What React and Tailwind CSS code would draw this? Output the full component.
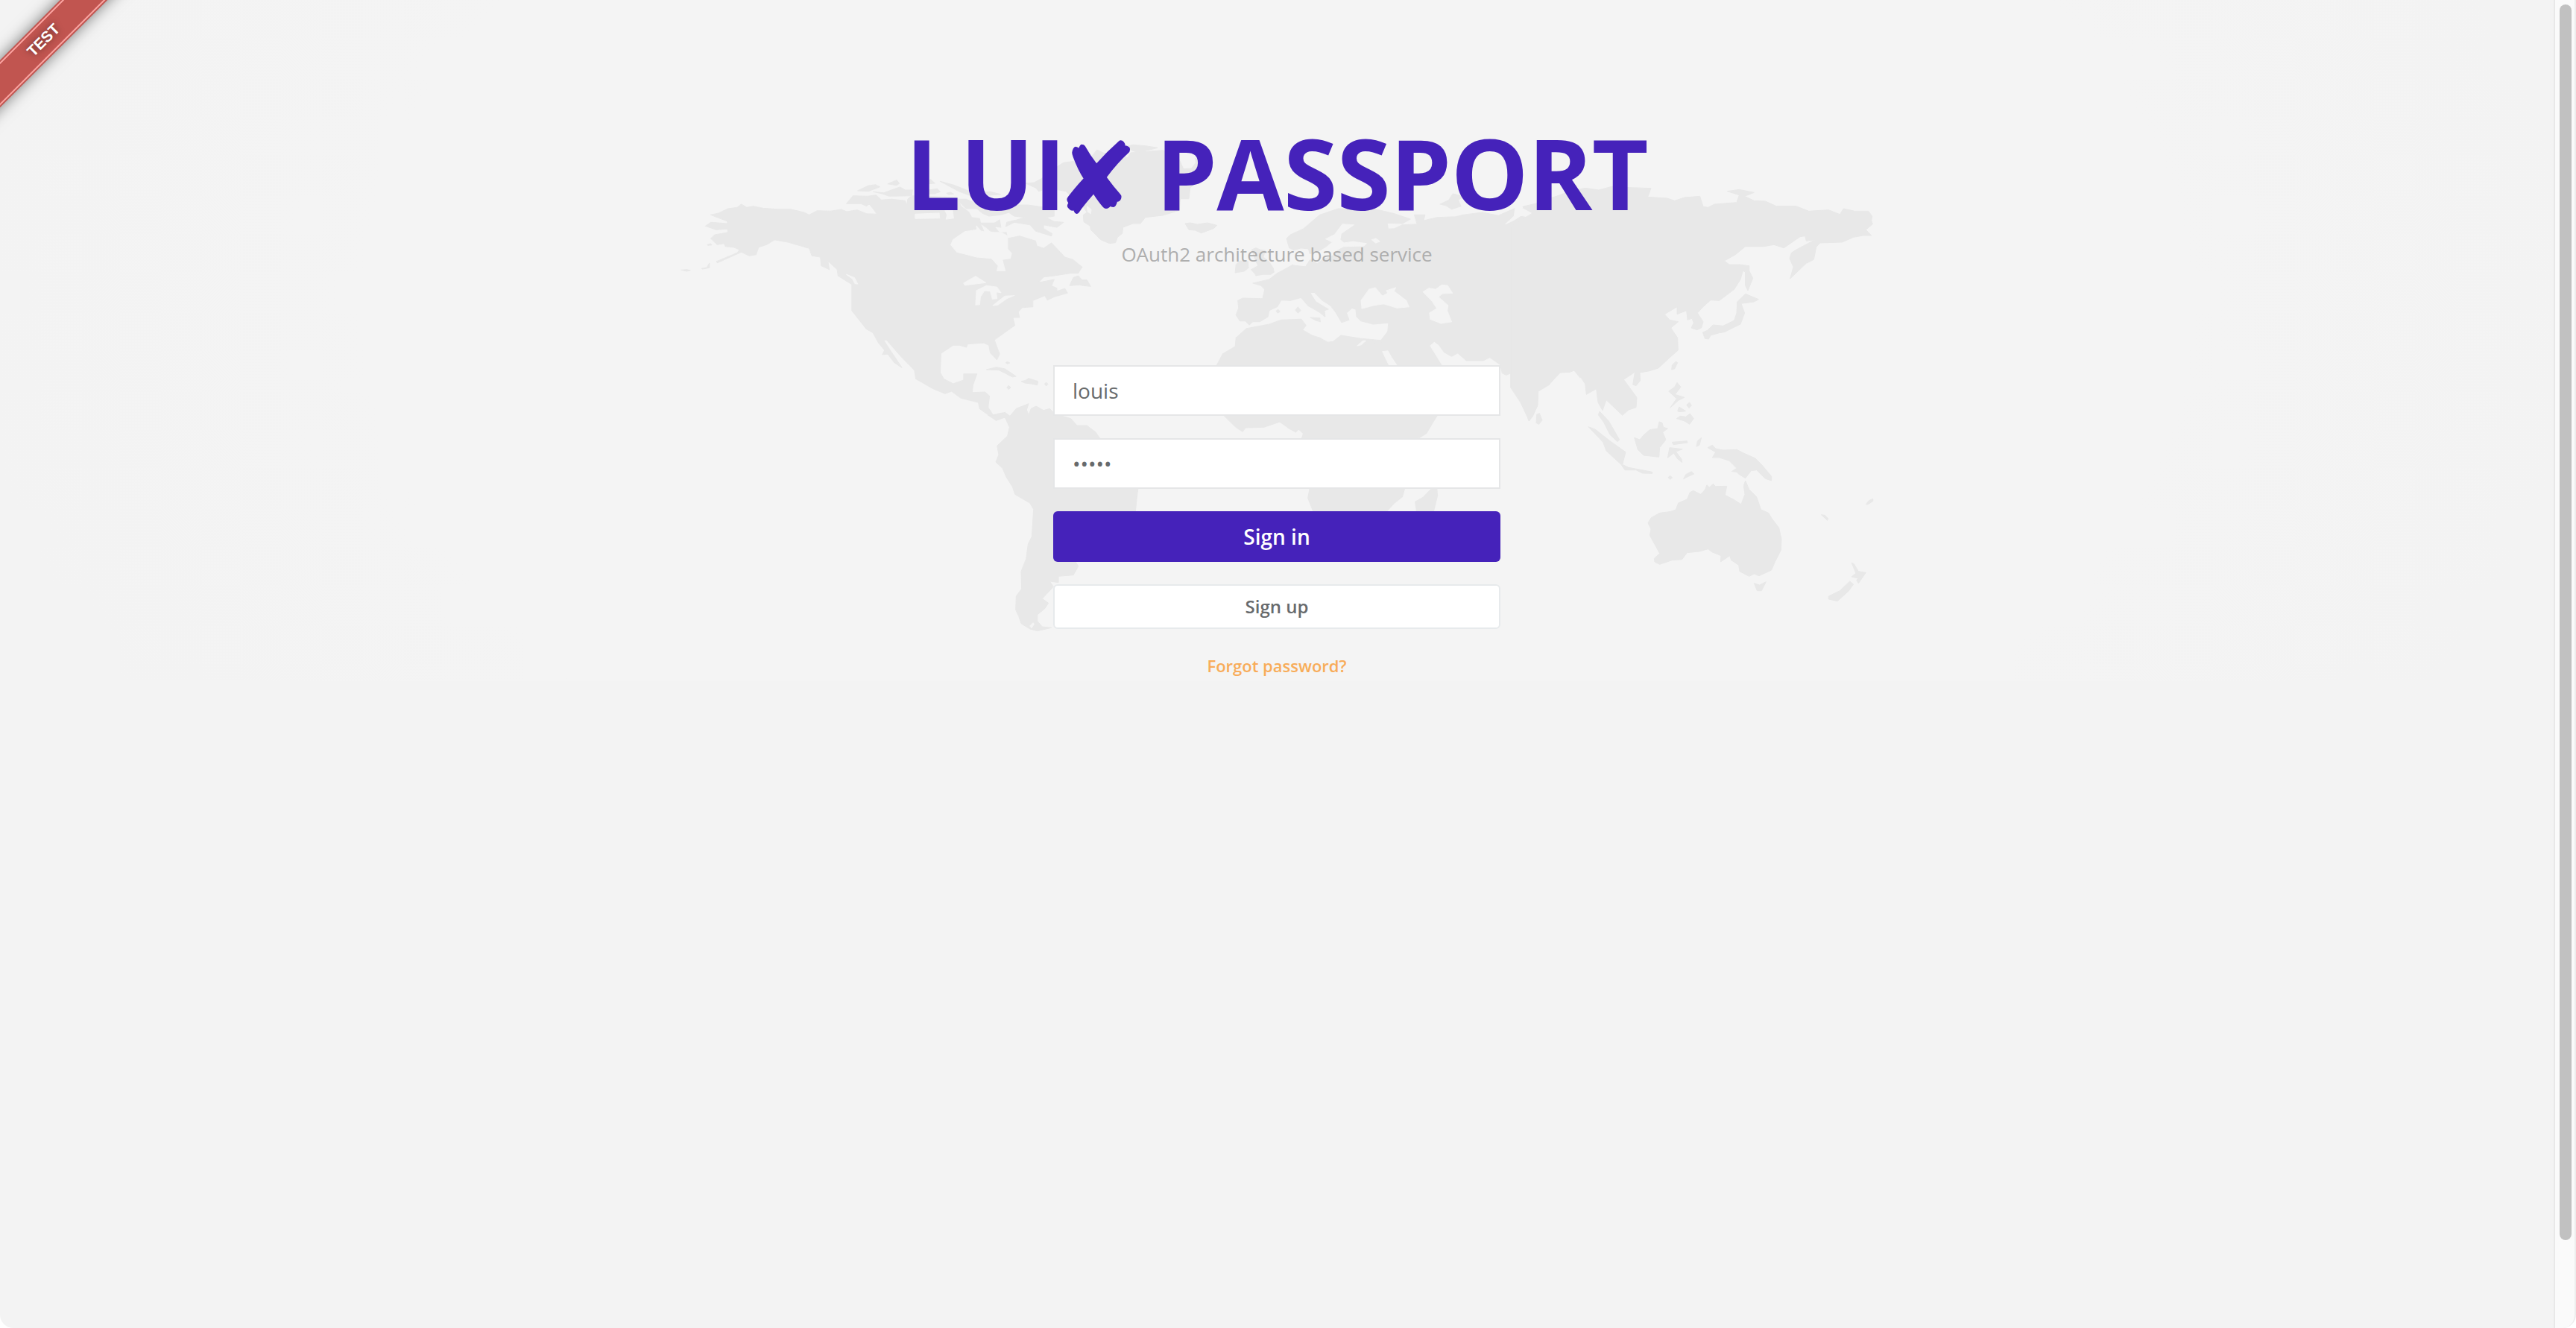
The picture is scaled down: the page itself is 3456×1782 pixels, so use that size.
const LAND = '#e8e8e8';
const WATER = '#f4f4f4';

const regions = [
  {
    name: 'north-america',
    transform: 'translate(900 180) scale(.35714 .33333)',
    land: [
      '150,325 180,318 215,300 250,295 265,282 285,295 310,290 345,298 400,302 450,302 500,315 520,325 550,308 600,310 640,303 660,312 700,305 735,320 775,322 745,280 735,290 715,280 660,280 685,248 740,250 770,245 790,265 830,262 880,268 887,286 890,262 905,248 1075,255 1090,290 1120,315 1130,335 1160,340 1165,365 1180,400 1260,395 1265,420 1310,410 1370,430 1375,450 1400,460 1430,438 1480,495 1510,505 1545,535 1530,560 1500,560 1440,570 1400,575 1380,598 1440,585 1430,610 1450,620 1450,632 1480,622 1490,640 1440,655 1415,668 1405,650 1360,670 1360,695 1320,698 1305,715 1310,738 1285,738 1292,770 1215,828 1235,885 1225,908 1200,880 1195,850 1175,840 1115,845 1110,858 1085,850 1060,850 1015,882 1012,960 1025,985 1060,1005 1100,990 1100,965 1150,965 1135,1010 1132,1040 1180,1038 1197,1055 1192,1100 1210,1130 1245,1122 1275,1137 1275,1150 1250,1140 1222,1153 1160,1105 1155,1080 1090,1063 1055,1035 1030,1045 985,1025 920,985 915,950 865,895 810,828 800,830 830,880 868,940 840,920 815,885 795,888 803,870 780,840 760,800 735,785 680,710 680,605 628,570 625,545 590,510 595,545 565,530 562,495 530,490 520,460 440,435 390,425 360,445 330,455 320,485 295,490 265,475 175,518 172,512 250,478 258,465 235,455 205,452 200,440 175,445 150,420 165,405 215,395 213,382 170,385 130,370 150,355 213,360 212,350 175,335',
      '1075,262 1110,262 1160,285 1340,285 1440,300 1440,330 1410,335 1440,352 1475,355 1450,375 1400,365 1400,380 1432,400 1430,410 1370,390 1350,365 1290,355 1258,372 1262,355 1300,345 1330,335 1290,330 1270,315 1240,325 1195,330 1170,318 1150,300 1110,300',
      '1160,358 1215,358 1235,345 1240,375 1215,372 1235,398 1200,390 1185,375',
      '702,228 740,208 768,203 785,212 742,230',
      '815,200 848,185 858,198 848,206',
      '760,232 800,236 860,213 880,225 908,225 905,248 820,250 795,240',
      '965,190 975,182 992,198 968,200',
      '968,225 1000,220 1012,232 990,240 968,240',
      '1012,190 1060,204 1110,225 1140,236 1200,232 1238,242 1200,246 1120,245 1085,232',
      '1036,238 1050,234 1062,241 1045,243',
      '137,445 150,441 153,446 140,448',
      '116,541 135,537 145,520 145,538 120,543',
      '39,547 60,545 73,548 60,552',
    ],
    water: [
      '918,322 1008,318 1010,338 918,340',
      '1030,308 1058,306 1062,338 1034,342 1038,325',
      '1052,445 1060,425 1105,392 1150,385 1148,370 1165,390 1190,395 1240,395 1265,410 1265,462 1280,480 1275,500 1245,505 1256,550 1225,550 1230,530 1205,500 1150,495 1075,475',
      '1100,600 1145,572 1183,598 1150,602 1105,608',
      '1210,690 1255,652 1290,650 1262,662 1228,688',
      '660,565 690,578 702,603 692,602 682,582',
      '1145,688 1148,630 1185,610 1225,616 1240,638 1222,635 1225,662 1208,664 1200,632 1178,630 1163,655 1160,686',
    ],
  },
  {
    name: 'greenland',
    transform: 'translate(1330 165) scale(.33333)',
    land: [
      '262,178 290,160 360,150 400,140 425,108 450,120 550,140 560,120 690,110 760,130 830,145 838,170 832,230 800,262 795,305 760,305 757,352 690,372 620,380 600,405 570,405 530,420 527,445 508,460 500,482 475,485 440,470 400,430 398,415 372,398 370,370 385,360 375,345 300,275 262,268',
      '540,95 570,88 620,92 670,100 620,112 590,120 560,108',
      '138,243 172,240 200,225 215,215 262,265 225,265 190,275 180,262',
      '315,655 330,622 350,615 365,632 385,632 400,658 370,655 355,652',
      '780,405 800,402 830,408 870,402 908,412 895,425 845,443 820,432 795,430',
    ],
    water: ['385,335 402,348 400,365 388,358', '756,140 775,182 805,180 820,160 815,120 756,118'],
  },
  {
    name: 'south-america',
    transform: 'translate(1240 440) scale(.33333)',
    land: [
      '255,350 290,350 325,340 345,355 370,325 420,305 412,330 420,350 430,325 450,315 480,332 505,325 520,340 545,352 590,365 615,393 655,393 690,420 705,442 780,490 860,560 875,600 860,650 855,690 850,740 830,800 720,850 640,920 610,942 620,960 600,995 540,1000 540,1025 505,1020 520,1042 475,1090 500,1108 485,1130 455,1155 455,1180 475,1203 512,1207 455,1220 425,1212 390,1190 380,1160 368,1135 370,1080 392,1050 390,980 410,930 418,870 433,840 440,730 425,705 365,670 355,640 330,600 315,565 288,540 300,510 293,475 335,435 343,400 325,360 290,372',
      '250,168 290,158 325,165 370,195 355,198 325,182 300,170',
      '390,215 405,212 420,203 458,215 455,230 430,225 405,222',
      '484,226 491,219 498,226 491,234',
      '332,240 340,232 348,240 340,248',
      '327,140 335,136 344,141 335,145',
    ],
    water: ['425,1200 438,1187 442,1192 432,1208'],
  },
  {
    name: 'europe-africa',
    transform: 'translate(1560 260) scale(.35714 .33333)',
    land: [
      '490,225 475,218 465,180 480,165 530,140 590,85 660,60 800,62 870,80 930,102 900,120 843,118 847,142 870,140 900,125 955,122 945,85 985,85 980,108 1030,95 1100,92 1130,85 1200,75 1260,88 1320,60 1400,40 1465,15 1600,0 1600,650 1568,740 1545,710 1490,720 1450,770 1410,795 1408,850 1390,895 1375,914 1365,880 1320,790 1312,720 1290,730 1275,722 1268,692 1200,720 1100,760 1060,830 1030,895 1015,920 990,965 960,985 900,1100 908,1190 900,1220 870,1245 840,1280 800,1320 600,1320 565,1278 545,1225 552,1187 600,1100 522,985 528,965 510,948 500,960 475,945 440,918 380,940 310,942 300,958 275,940 232,895 180,800 203,690 225,645 272,615 275,580 315,542 400,525 445,508 520,505 538,530 525,548 560,570 590,580 620,598 640,595 670,570 740,582 820,590 845,555 848,520 790,525 745,512 728,495 725,465 710,460 690,480 700,508 672,518 650,478 630,450 600,430 570,397 553,398 575,435 622,465 607,470 610,495 590,478 545,450 520,418 480,430 445,428 430,455 400,470 395,495 365,515 338,515 325,528 310,512 290,512 275,488 285,460 282,430 300,420 375,422 383,385 370,370 338,360 400,345 430,320 465,300 490,285 510,284',
      '335,225 350,218 365,225 385,228 378,255 400,275 415,300 418,315 405,325 375,325 350,330 345,320 332,305 358,290 345,260',
      '275,285 290,270 320,272 322,298 305,312 272,318',
      '498,468 508,456 518,470 508,480',
      '426,472 433,466 440,474 432,480',
      '555,498 590,500 592,515 575,510',
      '1042,42 1075,25 1090,0 1130,10 1110,25 1120,50 1085,62 1065,48',
      '948,1240 980,1220 1010,1187 1030,1187 1032,1215 1015,1290 955,1290',
      '1405,888 1415,884 1425,912 1412,928 1403,922',
      '740,590 770,588 800,605 830,600 840,640 790,640',
    ],
    water: [
      '520,222 545,225 550,245 585,235 615,215 638,195 612,182 645,165 675,122 718,125 670,160 666,185 680,198 715,193 765,200 755,210 680,212 655,225 640,245 600,262 580,278 552,262 535,290 492,285 485,232',
      '748,462 745,430 775,385 798,378 825,412 845,400 840,390 875,378 868,392 915,430 925,455 880,460 830,443 790,450',
      '978,395 1000,380 1025,385 1048,367 1070,370 1088,400 1050,402 1035,415 1072,450 1068,470 1085,515 1045,522 1005,505 1002,480 1030,462 1010,430',
      '785,185 800,180 815,192 800,198',
      '825,635 845,632 860,660 885,700 850,690',
      '1005,612 1020,598 1035,610 1055,640 1085,658 1108,645 1140,675 1205,675 1228,662 1265,690 1268,705 1056,700 1030,655',
      '1288,122 1320,90 1325,50 1342,20 1352,60 1388,80 1380,94 1345,88 1320,105',
      '730,612 752,592 762,592 745,608',
    ],
  },
  {
    name: 'asia',
    transform: 'translate(2040 220) scale(.33333)',
    land: [
      '45,200 60,165 130,135 200,110 260,97 315,105 370,90 440,95 525,98 512,133 590,138 620,148 660,135 722,130 735,172 755,175 780,162 870,155 880,125 832,110 880,103 940,115 902,130 940,148 985,150 1030,170 1110,170 1160,190 1240,185 1285,203 1300,180 1345,190 1400,190 1415,210 1412,228 1417,242 1390,265 1412,288 1380,288 1340,295 1295,315 1205,318 1190,335 1180,385 1150,400 1085,462 1098,415 1083,380 1090,358 1110,345 1185,305 1150,310 1145,290 1125,293 1060,338 1020,325 980,332 905,332 865,365 820,390 840,405 880,405 920,410 920,430 935,460 915,510 905,490 905,435 895,430 885,465 860,505 800,550 765,548 735,575 712,600 735,635 728,660 710,668 687,660 697,640 690,622 672,628 668,590 630,605 630,575 580,605 600,628 635,635 605,660 632,700 634,750 600,780 555,822 520,833 480,840 482,872 465,893 452,888 460,838 415,868 468,940 465,980 435,990 410,1012 345,950 330,992 312,960 305,905 265,928 260,885 222,828 200,838 160,840 120,880 70,915 68,975 35,1035 0,960 -40,900 -40,250',
      '872,555 905,523 958,545 940,555 888,562 902,600 885,645 820,677 800,680 765,690 757,705 742,703 733,678 752,670 775,648 815,652 860,630 870,600',
    ],
    water: [],
  },
  {
    name: 'oceania',
    transform: 'translate(2080 480) scale(.33333)',
    land: [
      '488,48 490,30 505,15 512,20 500,45',
      '476,135 500,118 510,100 525,118 502,148 540,160 515,172 482,202 508,165',
      '548,190 560,180 568,192 558,203',
      '512,215 518,198 545,215 518,218',
      '508,245 522,235 545,238 562,225 577,245 560,268 540,255',
      '338,322 360,330 375,312 400,290 432,285 438,258 450,262 455,280 472,285 452,300 465,330 440,362 437,400 375,393 352,370',
      '193,230 198,216 235,255 278,330 270,338 240,310 215,260',
      '153,278 180,288 240,335 303,380 290,430 315,442 410,460 410,466 370,465 345,452 300,452 285,430 225,375 212,340',
      '490,340 550,335 552,342 495,350',
      '480,362 532,368 505,378 528,408 530,422 510,405 497,384 472,403',
      '588,358 592,335 608,322 600,352',
      '474,482 482,475 491,483 482,490',
      '536,488 545,470 568,458 578,468 555,478',
      '633,362 652,352 665,366 695,372 750,370 780,385 825,405 850,430 890,478 890,495 865,487 830,452 808,455 785,485 760,470 750,460 730,458 750,445 720,415 680,402 652,402 665,380',
      '785,495 800,530 830,560 848,612 878,625 890,645 920,685 930,730 928,775 905,820 890,855 840,878 820,870 800,880 762,860 758,835 728,815 722,797 685,822 687,797 650,782 635,770 600,780 550,785 530,812 490,815 440,832 420,822 418,808 440,788 422,755 400,715 405,690 393,665 405,645 440,625 480,620 505,612 515,585 550,570 562,542 575,535 605,550 622,532 630,512 640,522 655,508 665,518 710,517 703,553 740,572 768,590 783,550 778,515',
      '820,908 842,915 868,902 850,938 832,938',
      '1212,825 1222,830 1240,860 1270,865 1240,908 1232,895 1240,888 1212,882 1230,868',
      '1205,900 1220,912 1200,940 1155,980 1120,972 1120,960 1165,938',
      '1090,632 1105,634 1118,648 1115,655',
      '1270,590 1282,575 1298,568 1298,577 1280,590',
    ],
    water: [],
  },
];

function WorldMap() {
  return (
    <svg className="absolute left-0 top-0 h-[910px] w-[3426px]" viewBox="0 0 3426 910" aria-hidden="true">
      {regions.map((region) => (
        <g key={region.name} transform={region.transform} strokeWidth="3" strokeLinejoin="round">
          {region.land.map((points) => (
            <polygon key={points} points={points} fill={LAND} stroke={LAND} />
          ))}
          {region.water.map((points) => (
            <polygon key={points} points={points} fill={WATER} stroke={WATER} />
          ))}
        </g>
      ))}
    </svg>
  );
}

function Ribbon() {
  return (
    <div className="absolute left-0 top-0 h-[240px] w-[240px] overflow-hidden">
      <div className="absolute -left-[144px] top-[34px] flex h-[45px] w-[400px] -rotate-45 flex-col justify-center bg-[#c15550] shadow-[0_0_20px_rgba(0,0,0,0.5)]">
        <div className="flex h-[41px] items-center justify-center border-y-2 border-[#fca5a2] pl-[7px] font-['Liberation_Sans',sans-serif] text-[20.4px] leading-none font-bold text-white [text-shadow:0_0_8px_rgba(0,0,0,0.5)]">
          TEST
        </div>
      </div>
    </div>
  );
}

function Scrollbar() {
  return (
    <div className="flex w-[30px] shrink-0 justify-center rounded-br-[18px] border-r-2 border-l-2 border-r-[#ededed] border-l-[#e8e8e8] bg-[#fafafa] pt-1.5">
      <div className="mr-[2px] ml-[4px] h-[1658px] w-4 rounded-full bg-[#c1c1c1]" />
    </div>
  );
}

export default function App() {
  return (
    <div className="h-[1782px] w-[3456px] overflow-hidden bg-white font-['Open_Sans',sans-serif] text-[#676a6c]">
      <div className="flex h-full">
        <main className="relative flex-1 overflow-hidden rounded-bl-[18px] bg-[#f3f3f3]">
          <div className="absolute left-0 top-0 h-[914px] w-full bg-[radial-gradient(ellipse_1750px_1100px_at_50%_45%,#f4f4f4_70%,#f3f3f3_100%)]" />
          <WorldMap />
          <Ribbon />
          <div className="relative flex flex-col items-center pt-[141px]">
            <h1 className="flex h-[180px] items-center text-[131px] leading-[180px] font-bold tracking-[-0.7px] whitespace-pre text-[#4522ba]">
              LUI<span className="relative top-[10px] -mr-[8px] -ml-[13px] font-['DejaVu_Sans',sans-serif] text-[131px] font-normal [-webkit-text-stroke:2px_#4522ba]">✘</span> PASSPORT
            </h1>
            <p className="mt-0.5 h-9 text-[26px] leading-9 text-[#aeaeae]">OAuth2 architecture based service</p>
            <form className="mt-[131px] flex w-[600px] flex-col items-stretch gap-[30px]">
              <div className="flex h-[68px] items-center border-2 border-[#e5e6e7] bg-white px-6 text-[28px] leading-none">louis</div>
              <div className="flex h-[68px] items-center border-2 border-[#e5e6e7] bg-white px-6 text-[28px] leading-none">•••••</div>
              <button type="button" className="h-[68px] rounded-md bg-[#4522ba] text-[28px] font-semibold text-white">Sign in</button>
              <button type="button" className="h-[60px] rounded-md border-2 border-[#e7eaec] bg-white text-[24px] font-semibold">Sign up</button>
            </form>
            <a className="mt-[33px] text-[22px] leading-8 font-semibold text-[#f8ac59]">Forgot password?</a>
          </div>
        </main>
        <Scrollbar />
      </div>
    </div>
  );
}
